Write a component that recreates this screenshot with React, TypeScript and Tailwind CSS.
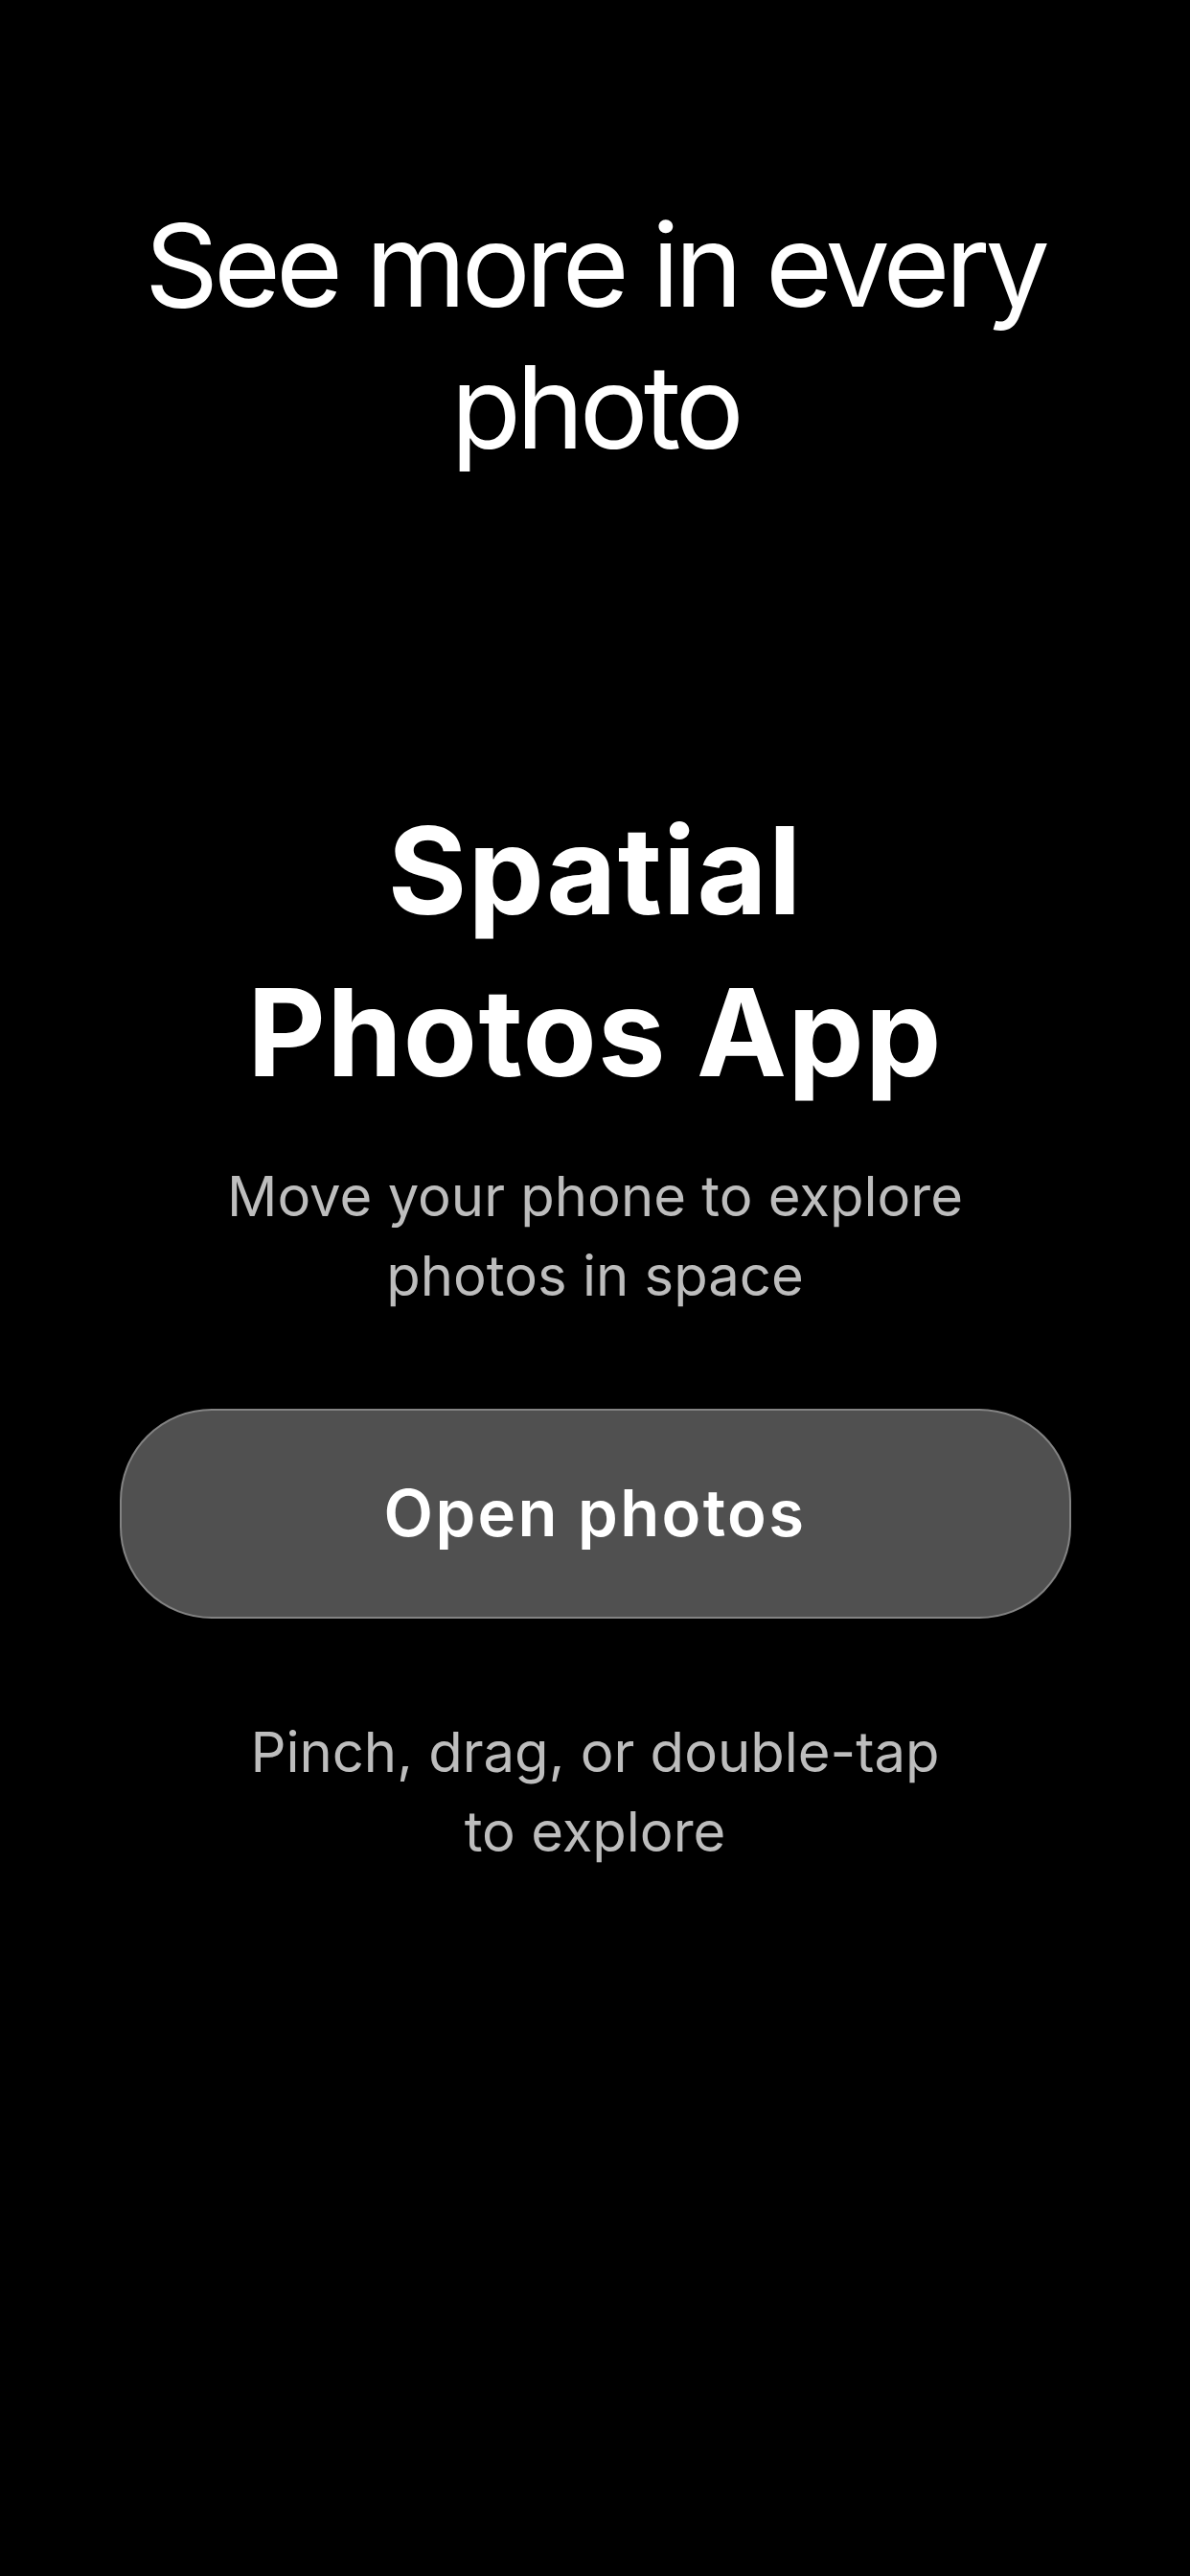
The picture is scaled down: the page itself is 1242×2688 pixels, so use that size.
export default function App() {
  return (
    <div className="min-h-[2688px] w-full bg-black font-['Inter','Noto_Sans',sans-serif] text-white flex flex-col items-center">
      {/* intro heading */}
      <h1 className="mt-[203px] text-center text-[120px] leading-[148px] font-normal tracking-[-0.042em]">
        See more in every
        <br />
        photo
      </h1>

      <h2 className="mt-[325px] text-center text-[126px] leading-[169px] font-bold tracking-[0.01em]">
        Spatial
        <br />
        Photos App
      </h2>

      <p className="mt-[45px] text-center text-[58px] leading-[83px] text-[#bdbdbd]">
        Move your phone to explore
        <br />
        photos in space
      </p>

      <button className="mt-[97px] w-[993px] h-[219px] rounded-[96px] bg-[#505050] border-2 border-[#838383] flex items-center justify-center">
        <span className="text-[67px] font-semibold text-white tracking-[0.035em]">Open photos</span>
      </button>

      <p className="mt-[98px] text-center text-[58px] leading-[83px] text-[#bdbdbd]">
        Pinch, drag, or double-tap
        <br />
        to explore
      </p>
    </div>
  )
}
